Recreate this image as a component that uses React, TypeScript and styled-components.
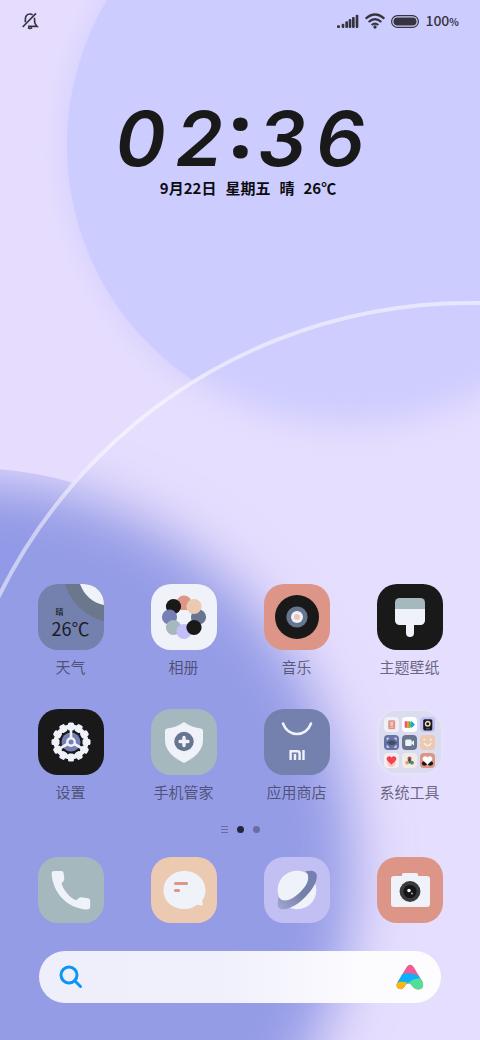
import React from "react";
import styled, { createGlobalStyle, css } from "styled-components";

const GlobalStyle = createGlobalStyle`
  *, *::before, *::after { box-sizing: border-box; }
  body {
    margin: 0;
    background: #e5dcfe;
    font-family: "Noto Sans", "Noto Sans CJK SC", sans-serif;
    color: #1a1a1c;
  }
  button { font: inherit; color: inherit; border: 0; padding: 0; background: none; cursor: pointer; }
`;

const Screen = styled.main`
  position: relative;
  isolation: isolate;
  min-height: 100vh;
  display: flex;
  flex-direction: column;
  overflow: hidden;
`;

const WallpaperSvg = styled.svg`
  position: absolute;
  inset: 0;
  z-index: -1;
  width: 100%;
  height: 100%;
`;

const StatusBar = styled.header`
  display: flex;
  align-items: center;
  justify-content: space-between;
  padding: 9px 21px 0 22px;
  color: #35343f;
`;

const StatusGroup = styled.div`
  display: flex;
  align-items: center;
  gap: 6px;
`;

const Battery = styled.span`
  display: flex;
  align-items: baseline;
  font: 500 14px/22px "Noto Sans CJK SC", sans-serif;
  small { font-size: 10px; font-weight: 700; }
`;

const ClockWidget = styled.section`
  display: flex;
  flex-direction: column;
  align-items: center;
  padding-top: 73px;
`;

const Time = styled.time`
  display: flex;
  align-items: flex-start;
  gap: 10px;
  font: italic 600 76px/64px "Inter", sans-serif;
  color: #19191a;
`;

const Colon = styled.span`
  font: 900 72px/48px "Noto Sans", sans-serif;
  margin: 0 -3px;
`;

const DateLine = styled.p`
  display: flex;
  gap: 9px;
  margin: 8px 0 0 16px;
  font: 700 15px/20px "Noto Sans CJK SC", sans-serif;
  color: #0c0c10;
`;

const Columns = css`
  display: grid;
  grid-template-columns: repeat(4, 1fr);
  justify-items: center;
  padding: 0 14px;
`;

const AppGrid = styled.section`
  ${Columns}
  row-gap: 31px;
  margin-top: auto;
  padding-top: 32px;
`;

const Dock = styled.nav`
  ${Columns}
  margin-top: 22px;
`;

const AppButton = styled.button`
  display: flex;
  flex-direction: column;
  align-items: center;
  gap: 6px;
`;

const Tile = styled.span<{ $bg: string }>`
  position: relative;
  display: block;
  width: 66px;
  height: 66px;
  border-radius: 20px;
  overflow: hidden;
  background: ${(p) => p.$bg};
  svg { display: block; width: 100%; height: 100%; }
`;

const Label = styled.span`
  font: 400 15px/22px "Noto Sans CJK SC", sans-serif;
  color: rgba(50, 48, 72, 0.7);
  white-space: nowrap;
`;

const WeatherText = styled.span`
  position: absolute;
  inset: 22px 0 0 14px;
  display: flex;
  flex-direction: column;
  align-items: flex-start;
  color: #1c1d24;
  text-align: left;
`;

const WeatherState = styled.span`
  font: 500 8px/11px "Noto Sans CJK SC", sans-serif;
  padding-left: 4px;
`;

const WeatherTemp = styled.span`
  font: 400 18px/22px "Noto Sans CJK SC", sans-serif;
`;

const FolderTile = styled(Tile)`
  border: 2px solid rgba(230, 228, 250, 0.8);
  display: grid;
  grid-template-columns: repeat(3, 15px);
  grid-auto-rows: 15px;
  gap: 3px;
  place-content: center;
`;

const MiniTile = styled.span<{ $bg: string }>`
  border-radius: 4px;
  background: ${(p) => p.$bg};
`;

const Pager = styled.div`
  display: flex;
  align-items: center;
  justify-content: center;
  gap: 9px;
  height: 12px;
  margin-top: 20px;
`;

const PageDot = styled.span<{ $active?: boolean }>`
  width: 7px;
  height: 7px;
  border-radius: 50%;
  background: ${(p) => (p.$active ? "#23253f" : "#6a6ca5")};
`;

const SearchBar = styled.form`
  display: flex;
  align-items: center;
  gap: 12px;
  height: 52px;
  margin: 28px 39px 37px;
  padding: 0 17px 0 20px;
  border-radius: 26px;
  background: linear-gradient(90deg, #efeffb 0%, #f0f0fc 45%, #fcfbfe 80%, #fdfcfe 100%);
  svg { display: block; flex: none; }
`;

const SearchInput = styled.input`
  flex: 1;
  min-width: 0;
  height: 100%;
  border: 0;
  outline: 0;
  background: none;
  font: 400 15px/22px "Noto Sans CJK SC", sans-serif;
`;

function Wallpaper() {
  return (
    <WallpaperSvg viewBox="0 0 480 1040" preserveAspectRatio="xMidYMid slice" aria-hidden="true">
      <defs>
        <filter id="soft" x="-30%" y="-30%" width="160%" height="160%">
          <feGaussianBlur stdDeviation="16" />
        </filter>
        <filter id="softer" x="-30%" y="-30%" width="160%" height="160%">
          <feGaussianBlur stdDeviation="28" />
        </filter>
        <mask id="outsideRing">
          <rect width="480" height="1040" fill="#fff" />
          <circle cx="470" cy="828" r="527" fill="#000" />
        </mask>
        <clipPath id="lowerShape">
          <circle cx="470" cy="828" r="527" />
          <circle cx="-32" cy="852" r="384" />
        </clipPath>
      </defs>
      <rect width="480" height="1040" fill="#e6ddfe" />
      <circle cx="350" cy="145" r="281" fill="#cdccfe" filter="url(#soft)" />
      <circle cx="350" cy="145" r="283" fill="#cdccfe" mask="url(#outsideRing)" />
      <g clipPath="url(#lowerShape)">
        <ellipse cx="-32" cy="872" rx="386" ry="392" fill="#9299e6" filter="url(#softer)" />
      </g>
      <circle cx="470" cy="828" r="527" fill="#ffffff" fillOpacity="0.03" />
      <circle cx="470" cy="828" r="525" fill="none" stroke="#fff" strokeOpacity="0.5" strokeWidth="4" />
    </WallpaperSvg>
  );
}

function MutedBell() {
  return (
    <svg width="17" height="18" viewBox="0 0 51 54" fill="none" stroke="currentColor" strokeWidth="5" aria-label="静音">
      <path d="M2 45 42 4" />
      <path d="M10 31V23C10 12 16 6 24 6c3 0 6 1 8 3M37 17c1 3 1 8 1 13 0 5 3 9 7 13H18M18 47q6 5 12 0" />
    </svg>
  );
}

function Signal() {
  return (
    <svg width="22" height="15" viewBox="0 0 66 45" fill="currentColor" aria-label="信号">
      <rect x="0" y="34" width="9" height="8" rx="3" />
      <rect x="14" y="29" width="8" height="13" rx="3" />
      <rect x="25" y="22" width="8" height="20" rx="3" />
      <rect x="35" y="15" width="8" height="27" rx="3" />
      <rect x="45" y="9" width="8" height="33" rx="3" />
      <rect x="56" y="2" width="8" height="40" rx="3" />
    </svg>
  );
}

function Wifi() {
  return (
    <svg width="20" height="16" viewBox="0 0 60 48" fill="none" stroke="currentColor" strokeWidth="6.500" aria-label="无线网络">
      <path d="M2 17Q30-8 58 17M11 27q19-17 38 0M20 36q10-8 20 0" />
      <circle cx="30" cy="42" r="5" fill="currentColor" stroke="none" />
    </svg>
  );
}

function BatteryIcon() {
  return (
    <svg width="28" height="13" viewBox="0 0 28 13" aria-hidden="true">
      <rect x="0.6" y="0.6" width="26.800" height="11.800" rx="5.900" fill="none" stroke="currentColor" strokeWidth="1.200" />
      <rect x="2.500" y="2.500" width="23" height="8" rx="4" fill="currentColor" />
    </svg>
  );
}

function WeatherArt() {
  return (
    <>
      <svg viewBox="0 0 66 66">
        <path d="M27 0C32 17 46 32 66 37V0Z" fill="#6b778d" />
        <path d="M42 0C46 11 55 19 66 21V0Z" fill="#f0f2f9" />
      </svg>
      <WeatherText>
        <WeatherState>晴</WeatherState>
        <WeatherTemp>26℃</WeatherTemp>
      </WeatherText>
    </>
  );
}

function GalleryArt() {
  const petals: [number, number, string][] = [
    [33, 19, "#dd9588"],
    [22.5, 22.5, "#19191a"],
    [18.5, 33, "#7480b3"],
    [22.5, 43.5, "#a5b8be"],
    [33, 47.5, "#c2c0f6"],
    [47.5, 33, "#68758e"],
    [43, 43.5, "#19191a"],
    [43, 22.5, "#ecc9b1"],
  ];
  return (
    <svg viewBox="0 0 66 66">
      {petals.map(([x, y, fill]) => (
        <circle key={`${x}-${y}`} cx={x} cy={y} r="7.6" fill={fill} />
      ))}
      <circle cx="33" cy="33" r="7" fill="#f0f2f9" />
    </svg>
  );
}

function MusicArt() {
  return (
    <svg viewBox="0 0 66 66">
      <circle cx="33" cy="33" r="22" fill="#19191a" />
      <circle cx="33" cy="33" r="10.6" fill="#68758e" />
      <circle cx="33" cy="33" r="6" fill="#f0f2f9" />
      <circle cx="33" cy="33" r="3" fill="#ecc9b1" />
    </svg>
  );
}

function ThemeArt() {
  return (
    <svg viewBox="0 0 66 66">
      <path d="M18 24H48V36.500a4.500 4.500 0 0 1-4.500 4.500H37V49a4 4 0 0 1-8 0V41H22.500a4.500 4.500 0 0 1-4.500-4.500Z" fill="#f0f2f9" />
      <path d="M18 25V18.500A4.500 4.500 0 0 1 22.500 14h21A4.500 4.500 0 0 1 48 18.500V25Z" fill="#a5b8be" />
    </svg>
  );
}

function SettingsArt() {
  const around = (n: number) => Array.from({ length: n }, (_, i) => (360 / n) * i);
  return (
    <svg viewBox="0 0 66 66">
      {around(12).map((a) => (
        <rect key={a} x="30" y="13.500" width="6" height="8" rx="1.600" fill="#f0f2f9" transform={`rotate(${a} 33 33)`} />
      ))}
      <circle cx="33" cy="33" r="15.200" fill="none" stroke="#f0f2f9" strokeWidth="4.600" />
      <circle cx="33" cy="33" r="9.500" fill="#7480b3" />
      {around(3).map((a) => (
        <path key={a} d="M33 19V29" stroke="#f0f2f9" strokeWidth="2.600" transform={`rotate(${a} 33 33)`} />
      ))}
      <circle cx="33" cy="33" r="3.700" fill="#7480b3" stroke="#f0f2f9" strokeWidth="2.400" />
    </svg>
  );
}

function SecurityArt() {
  return (
    <svg viewBox="0 0 66 66">
      <path d="M33 13C38 17 44 18.500 50 19.500Q52 20 52 22V31C52 42 43 49 33 54 23 49 14 42 14 31V22Q14 20 16 19.500C22 18.500 28 17 33 13Z" fill="#f0f2f9" />
      <circle cx="33" cy="32.500" r="9.700" fill="#68758e" />
      <path d="M33 28.500v8M29 32.500h8" stroke="#f0f2f9" strokeWidth="3.400" strokeLinecap="round" />
    </svg>
  );
}

function StoreArt() {
  return (
    <svg viewBox="0 0 66 66" fill="none" stroke="#f0f2f9">
      <path d="M19 14.500C24 28.500 42 28.500 47 14.500" strokeWidth="2.600" strokeLinecap="round" />
      <path d="M26.600 51V42.300H33.500Q35.600 42.300 35.600 44.500V51M31 45v6M39.500 41v10" strokeWidth="2.400" />
    </svg>
  );
}

function FolderArt() {
  return (
    <>
      <MiniTile $bg="#efeff6">
        <svg viewBox="0 0 14 14"><rect x="4" y="3" width="6.400" height="8.400" rx="1" fill="#dd9588" /><path d="M5.500 5h3.500M5.500 9.500h3.500" stroke="#efc4bb" /><circle cx="7.200" cy="7" r="1.300" fill="#f3cfc8" /></svg>
      </MiniTile>
      <MiniTile $bg="#ffffff">
        <svg viewBox="0 0 14 14"><path d="M2.500 4h2.200v6H2.500z" fill="#f2498b" /><path d="M4.500 4h2v6.300h-2z" fill="#fb9b24" /><path d="M6.300 3.800l3 1.200v4.200l-3 1.300z" fill="#55c34f" /><path d="M8.700 3.800l3.400 3.300-3.400 3.300z" fill="#1c9df0" /></svg>
      </MiniTile>
      <MiniTile $bg="#c2c0f6">
        <svg viewBox="0 0 14 14"><rect x="3" y="2" width="8.500" height="10.500" rx="1.500" fill="#19191a" /><circle cx="7.200" cy="6.300" r="2.100" fill="none" stroke="#f3dccb" strokeWidth="1.300" /><path d="M5.500 11h3.500" stroke="#68758e" strokeWidth="0.800" /></svg>
      </MiniTile>
      <MiniTile $bg="#6672a8">
        <svg viewBox="0 0 14 14"><path d="M3 4.800V3h1.800M9.500 3h1.800v1.800M11.300 9.500v1.800H9.500M4.800 11.300H3V9.500" fill="none" stroke="#dfe3f2" /><rect x="4.500" y="5" width="5.500" height="4.500" fill="#4a5268" /><path d="M2.500 7.200h9.500" stroke="#39415a" /></svg>
      </MiniTile>
      <MiniTile $bg="#68758e">
        <svg viewBox="0 0 14 14"><rect x="3" y="4.300" width="6" height="6" rx="1.200" fill="#f0f2f9" /><path d="M8.200 7.200l3-2.200v5z" fill="#f0f2f9" /></svg>
      </MiniTile>
      <MiniTile $bg="#ecc9b1">
        <svg viewBox="0 0 14 14"><path d="M3.800 7.500q3.300 5 6.700 0" fill="none" stroke="#fbf1ea" strokeWidth="1.200" /><circle cx="4" cy="4.500" r="0.900" fill="#fbf1ea" /><circle cx="10" cy="4.500" r="0.900" fill="#fbf1ea" /></svg>
      </MiniTile>
      <MiniTile $bg="#f5eef0">
        <svg viewBox="0 0 14 14"><circle cx="7" cy="9" r="4" fill="#f6c9c9" /><path d="M7 11L3 7C1 4 5 1.500 7 4.300 9 1.500 13 4 11 7Z" fill="#f4434a" /></svg>
      </MiniTile>
      <MiniTile $bg="#f1ebea">
        <svg viewBox="0 0 14 14"><circle cx="7" cy="5.200" r="1.900" fill="#b5533f" /><path d="M7 4.500L4 9.500h6z" fill="#3d4e85" /><circle cx="4.900" cy="9" r="1.800" fill="#e0a34a" /><circle cx="9.300" cy="9" r="1.800" fill="#4f8d64" /></svg>
      </MiniTile>
      <MiniTile $bg="#dd9588">
        <svg viewBox="0 0 14 14"><ellipse cx="4.300" cy="9.800" rx="2.500" ry="2" fill="#19191a" /><ellipse cx="9.700" cy="9.800" rx="2.500" ry="2" fill="#19191a" /><path d="M7 11L3 7C1 4 5 1.500 7 4.300 9 1.500 13 4 11 7Z" fill="#ffffff" /></svg>
      </MiniTile>
    </>
  );
}

function PhoneArt() {
  return (
    <svg viewBox="0 0 66 66">
      <path d="M16 14H23.500Q25.300 14 25.600 16L26.300 21.500Q26.500 23.300 25.300 24.400L23.500 26.200C24.800 32 31.500 41 38.300 43.300L40.500 41.200Q41.800 40 43.500 40.200L50 41.200Q52 41.500 52.200 43.500V49.500Q52.200 52.500 49 52.600C28 51 15 35 13.600 17Q13.500 14.200 16 14Z" fill="#f0f2f9" />
    </svg>
  );
}

function MessagesArt() {
  return (
    <svg viewBox="0 0 66 66">
      <path d="M33.500 14C45.500 14 54.500 22.500 54.500 33.500 54.500 37.500 53.300 41 51.200 43.800L51.800 47.500Q51.800 49 50.300 48.500L46 47.800C42.500 50.600 38.300 52 33.500 52 21.500 52 12.500 44 12.500 33.500 12.500 22.500 21.500 14 33.500 14Z" fill="#f0f2f9" />
      <path d="M24.500 26.500H35.500M24.500 33.500H27.500" stroke="#dd9588" strokeWidth="3.200" strokeLinecap="round" />
    </svg>
  );
}

function BrowserArt() {
  return (
    <svg viewBox="0 0 66 66">
      <defs>
        <linearGradient id="orbit" x1="0" y1="1" x2="1" y2="0">
          <stop offset="0" stopColor="#a3a9d4" />
          <stop offset="0.500" stopColor="#7480a8" />
          <stop offset="1" stopColor="#7480b3" />
        </linearGradient>
      </defs>
      <circle cx="33" cy="33" r="19.300" fill="#f0f2f9" />
      <path d="M41 14.500C49 12.500 53.500 14.500 52.800 20.500 52 29 43 39.500 34.500 46 25.500 52.500 17 54 14.500 50.500 13 48.500 14 44 14.600 40 18 45 24 44.500 31 39.500 39 33.500 45.500 25.500 44 18.500 43.500 16.300 42.500 15.300 41 14.500Z" fill="url(#orbit)" />
    </svg>
  );
}

function CameraArt() {
  return (
    <svg viewBox="0 0 66 66">
      <path d="M17 19H25V17.500Q25 16 26.500 16H39.500Q41 16 41 17.500V19H50Q53 19 53 22V47Q53 50 50 50H17Q14 50 14 47V22Q14 19 17 19Z" fill="#f0f2f9" />
      <circle cx="33" cy="34.500" r="10.400" fill="#3a3a3c" />
      <circle cx="33" cy="34.500" r="6.600" fill="#151517" />
      <circle cx="32" cy="33.500" r="1.800" fill="#f0f2f9" />
      <circle cx="35" cy="36.500" r="0.900" fill="#b9bac2" />
    </svg>
  );
}

function AssistantLogo() {
  return (
    <svg width="28" height="26" viewBox="0 0 84 78" aria-hidden="true">
      <clipPath id="assistantShape">
        <path d="M32 9Q42-6 53 9L80 55Q86 70 72 76 63 79 53 71L43 59Q36 56 30 61L23 71Q15 80 6 73-2 66 4 56Z" />
      </clipPath>
      <g clipPath="url(#assistantShape)">
        <rect width="84" height="78" fill="#f05c97" />
        <path d="M0 78V40Q20 26 40 28 68 31 84 50L60 60 0 78Z" fill="#0fb0fb" />
        <path d="M0 57Q16 50 32 55V78H0Z" fill="#fdb909" />
        <path d="M37 57Q50 42 84 41V78H40Z" fill="#52df95" />
      </g>
    </svg>
  );
}

interface App {
  name: string;
  bg: string;
  art: React.ReactNode;
  folder?: boolean;
}

const apps: App[] = [
  { name: "天气", bg: "#7480ae", art: <WeatherArt /> },
  { name: "相册", bg: "#f0f2f9", art: <GalleryArt /> },
  { name: "音乐", bg: "#dd9588", art: <MusicArt /> },
  { name: "主题壁纸", bg: "#19191a", art: <ThemeArt /> },
  { name: "设置", bg: "#19191a", art: <SettingsArt /> },
  { name: "手机管家", bg: "#a5b8be", art: <SecurityArt /> },
  { name: "应用商店", bg: "#7480ae", art: <StoreArt /> },
  { name: "系统工具", bg: "rgba(218, 219, 240, 0.9)", art: <FolderArt />, folder: true },
];

const dockApps: App[] = [
  { name: "电话", bg: "#a5b8be", art: <PhoneArt /> },
  { name: "短信", bg: "#ecc9b1", art: <MessagesArt /> },
  { name: "浏览器", bg: "#c2c0f3", art: <BrowserArt /> },
  { name: "相机", bg: "#dd9588", art: <CameraArt /> },
];

export default function HomeScreen() {
  return (
    <Screen>
      <GlobalStyle />
      <Wallpaper />
      <StatusBar>
        <MutedBell />
        <StatusGroup>
          <Signal />
          <Wifi />
          <BatteryIcon />
          <Battery>100<small>%</small></Battery>
        </StatusGroup>
      </StatusBar>
      <ClockWidget>
        <Time dateTime="02:36">
          <span>0</span>
          <span>2</span>
          <Colon>:</Colon>
          <span>3</span>
          <span>6</span>
        </Time>
        <DateLine>
          <span>9月22日</span>
          <span>星期五</span>
          <span>晴</span>
          <span>26℃</span>
        </DateLine>
      </ClockWidget>
      <AppGrid>
        {apps.map((app) => (
          <AppButton key={app.name} type="button">
            {app.folder ? <FolderTile $bg={app.bg}>{app.art}</FolderTile> : <Tile $bg={app.bg}>{app.art}</Tile>}
            <Label>{app.name}</Label>
          </AppButton>
        ))}
      </AppGrid>
      <Pager>
        <svg width="7" height="8" viewBox="0 0 7 8" stroke="#6a6ca5" aria-hidden="true">
          <path d="M0 1.500h7M0 4.500h7M0 7.500h7" />
        </svg>
        <PageDot $active />
        <PageDot />
      </Pager>
      <Dock>
        {dockApps.map((app) => (
          <AppButton key={app.name} type="button" aria-label={app.name}>
            <Tile $bg={app.bg}>{app.art}</Tile>
          </AppButton>
        ))}
      </Dock>
      <SearchBar role="search">
        <svg width="24" height="24" viewBox="0 0 24 24" fill="none" stroke="#0c95f6" strokeWidth="3" strokeLinecap="round" aria-hidden="true">
          <circle cx="10" cy="10" r="8" />
          <path d="M16.500 16.500l5 5" />
        </svg>
        <SearchInput type="text" aria-label="搜索" />
        <button type="button" aria-label="小爱同学"><AssistantLogo /></button>
      </SearchBar>
    </Screen>
  );
}
